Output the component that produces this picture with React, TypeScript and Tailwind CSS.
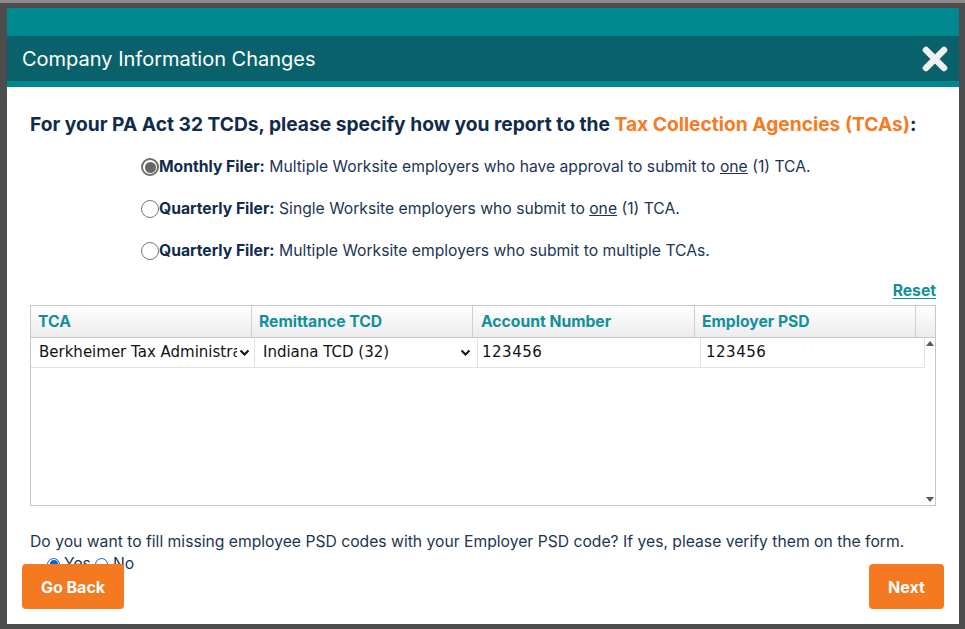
import React from "react";

const font = { fontFamily: "Inter, 'Noto Sans', sans-serif" };

function Radio({ checked, variant }: { checked?: boolean; variant?: "grey" | "blue" }) {
  if (variant === "blue") {
    return (
      <span className="inline-flex h-[13px] w-[13px] shrink-0 items-center justify-center rounded-full border border-[#0a63d6] bg-white">
        {checked && <span className="h-[8px] w-[8px] rounded-full bg-[#0a63d6]" />}
      </span>
    );
  }
  return (
    <span
      className={
        "inline-flex h-[18px] w-[18px] shrink-0 items-center justify-center rounded-full border bg-white " +
        (checked ? "border-[2px] border-[#6e6e6e]" : "border-[#767676]")
      }
    >
      {checked && <span className="h-[11px] w-[11px] rounded-full bg-[#666666]" />}
    </span>
  );
}

function Chevron() {
  return (
    <svg width="11" height="8" viewBox="0 0 11 8" className="shrink-0">
      <path d="M1.5 1.5 L5.5 5.5 L9.5 1.5" fill="none" stroke="#111" strokeWidth="2" />
    </svg>
  );
}

function FilerOption({ checked, title, children }: { checked?: boolean; title: string; children: React.ReactNode }) {
  return (
    <div className="flex h-[42px] items-center">
      <Radio checked={checked} />
      <span className="text-[15.7px] text-[#1b3553]">
        <b className="font-bold text-[#102c4c]">{title}</b> {children}
      </span>
    </div>
  );
}

export default function App() {
  return (
    <div className="h-[629px] w-[965px] overflow-hidden bg-[#4d4d4d]" style={font}>
      <div className="h-[3px] bg-[#8a8a8a]" />
      <div className="ml-[7px] mt-[5px] flex h-[616px] w-[952px] flex-col bg-white">
        <div className="h-[28px] bg-[#008891]" />
        <div className="flex h-[45px] items-center justify-between bg-[#09626b] pl-[15px] pr-[11px]">
          <span className="text-[20px] text-white">Company Information Changes</span>
          <svg width="26" height="26" viewBox="0 0 26 26">
            <path d="M4 4 L22 22 M22 4 L4 22" stroke="#f0f0f0" strokeWidth="6.5" strokeLinecap="round" />
          </svg>
        </div>
        <div className="h-[6px] bg-[#008891]" />

        <div className="relative flex-1 px-[23px] pt-[25px]">
          <h2 className="text-[19.2px] font-bold leading-[24px] text-[#102c4c]">
            For your PA Act 32 TCDs, please specify how you report to the{" "}
            <span className="text-[#f57c22]">Tax Collection Agencies (TCAs)</span>:
          </h2>

          <div className="ml-[111px] mt-[10px] flex flex-col">
            <FilerOption checked title="Monthly Filer:">
              Multiple Worksite employers who have approval to submit to <u>one</u> (1) TCA.
            </FilerOption>
            <FilerOption title="Quarterly Filer:">
              Single Worksite employers who submit to <u>one</u> (1) TCA.
            </FilerOption>
            <FilerOption title="Quarterly Filer:">
              Multiple Worksite employers who submit to multiple TCAs.
            </FilerOption>
          </div>

          <div className="mt-[10px] flex justify-end">
            <a className="text-[15.7px] font-bold leading-[18px] text-[#12909a] underline underline-offset-2">Reset</a>
          </div>

          <div className="mt-[5px] h-[201px] border border-[#c8c8c8]">
            <div className="grid h-[32px] grid-cols-[221px_221px_222px_221px_1fr] border-b border-[#c8c8c8] bg-gradient-to-b from-white to-[#ececec] text-[15.7px] font-bold text-[#12909a]">
              <div className="flex items-center border-r border-[#cfcfcf] px-[7px]">TCA</div>
              <div className="flex items-center border-r border-[#cfcfcf] px-[7px]">Remittance TCD</div>
              <div className="flex items-center border-r border-[#cfcfcf] px-[8px]">Account Number</div>
              <div className="flex items-center border-r border-[#cfcfcf] px-[7px]">Employer PSD</div>
              <div />
            </div>
            <div className="flex h-[167px]">
              <div className="w-[894px]">
                <div
                  className="grid h-[30px] grid-cols-[224px_223px_223px_224px] border-b border-[#e2e2e2] text-[15px] text-[#111]"
                  style={{ fontFamily: "'DejaVu Sans', sans-serif" }}
                >
                  <div className="flex items-center gap-[2px] overflow-hidden border-r border-[#e2e2e2] pl-[8px] pr-[4px]">
                    <span className="flex-1 overflow-hidden whitespace-nowrap">Berkheimer Tax Administrator</span>
                    <Chevron />
                  </div>
                  <div className="flex items-center border-r border-[#e2e2e2] pl-[8px] pr-[6px]">
                    <span className="flex-1 whitespace-nowrap">Indiana TCD (32)</span>
                    <Chevron />
                  </div>
                  <div className="flex items-center border-r border-[#e2e2e2] pl-[4px] tracking-[0.5px]">123456</div>
                  <div className="flex items-center border-r border-[#e2e2e2] pl-[5px] tracking-[0.5px]">123456</div>
                </div>
              </div>
              <div className="flex flex-1 flex-col items-center justify-between py-[3px]">
                <svg width="8" height="5" viewBox="0 0 8 5">
                  <path d="M0 5 L4 0 L8 5 Z" fill="#505a6a" />
                </svg>
                <svg width="8" height="5" viewBox="0 0 8 5">
                  <path d="M0 0 L4 5 L8 0 Z" fill="#505a6a" />
                </svg>
              </div>
            </div>
          </div>

          <p className="mt-[26px] text-[15.7px] leading-[20px] text-[#1b3553]">
            Do you want to fill missing employee PSD codes with your Employer PSD code? If yes, please verify them on the form.
          </p>
          <div className="ml-[17px] mt-[2px] flex items-center text-[15.7px] leading-[20px] text-[#1b3553]">
            <Radio checked variant="blue" />
            <span className="ml-[4px]">Yes</span>
            <span className="ml-[4px]" />
            <Radio variant="blue" />
            <span className="ml-[5px]">No</span>
          </div>

          <button className="absolute bottom-[15px] left-[15px] h-[45px] w-[102px] rounded-[4px] bg-[#f47920] text-[16px] font-bold text-white">
            Go Back
          </button>
          <button className="absolute bottom-[15px] right-[15px] h-[45px] w-[75px] rounded-[4px] bg-[#f47920] text-[16px] font-bold text-white">
            Next
          </button>
        </div>
      </div>
    </div>
  );
}
